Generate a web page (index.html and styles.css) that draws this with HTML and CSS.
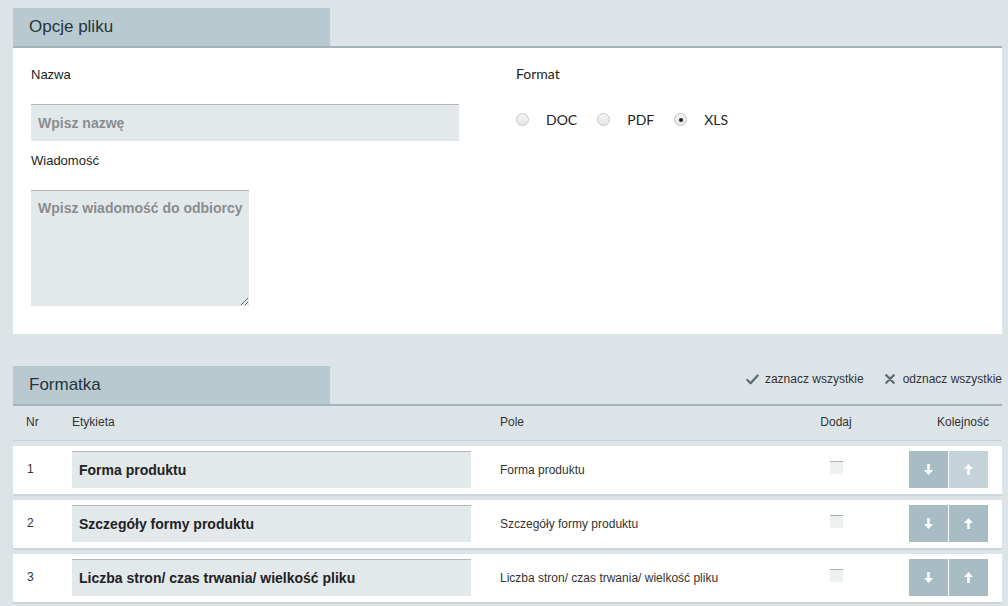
FILE: index.html
```html
<!DOCTYPE html>
<html lang="pl">
<head>
<meta charset="utf-8">
<title>Opcje pliku</title>
<link rel="stylesheet" href="styles.css">
</head>
<body>
<section class="section">
  <div class="sec-head">
    <h2 class="tab">Opcje pliku</h2>
  </div>
  <div class="panel">
    <div class="col">
      <label class="lbl" for="nazwa">Nazwa</label>
      <input class="field" id="nazwa" type="text" placeholder="Wpisz nazwę">
      <label class="lbl lbl-2" for="wiad">Wiadomość</label>
      <textarea class="field area" id="wiad" placeholder="Wpisz wiadomość do odbiorcy"></textarea>
    </div>
    <div class="col">
      <div class="lbl lbl-format">Format</div>
      <div class="radios">
        <label class="radio"><input type="radio" name="fmt"><span>DOC</span></label>
        <label class="radio"><input type="radio" name="fmt"><span>PDF</span></label>
        <label class="radio"><input type="radio" name="fmt" checked><span>XLS</span></label>
      </div>
    </div>
  </div>
</section>

<section class="section section-2">
  <div class="sec-head">
    <h2 class="tab">Formatka</h2>
    <div class="actions">
      <a class="act"><svg width="13" height="11" viewBox="0 0 13 11"><path d="M1.3 6 L4.6 9.3 L11.7 1.5" fill="none" stroke="#5d6b70" stroke-width="2.2" stroke-linecap="round" stroke-linejoin="round"/></svg>zaznacz wszystkie</a>
      <a class="act act-x"><svg width="10" height="10" viewBox="0 0 10 10"><path d="M1.3 1.3 L8.7 8.7 M8.7 1.3 L1.3 8.7" fill="none" stroke="#5d6b70" stroke-width="2.3" stroke-linecap="round"/></svg>odznacz wszystkie</a>
    </div>
  </div>
  <div class="grid thead">
    <div class="c-nr">Nr</div>
    <div>Etykieta</div>
    <div>Pole</div>
    <div class="c-add">Dodaj</div>
    <div class="c-ord">Kolejność</div>
  </div>
  <div class="grid row">
    <div class="c-nr">1</div>
    <div><input class="rfield" type="text" value="Forma produktu"></div>
    <div class="pole">Forma produktu</div>
    <div class="c-add"><input class="chk" type="checkbox"></div>
    <div class="c-ord"><span class="btns"><button class="btn"><svg width="9" height="11" viewBox="0 0 9 11"><path d="M3.2 0 H5.8 V6 H9 L4.5 11 L0 6 H3.2 Z" fill="#fff"/></svg></button><button class="btn off"><svg width="9" height="11" viewBox="0 0 9 11"><path d="M3.2 11 H5.8 V5 H9 L4.5 0 L0 5 H3.2 Z" fill="#fff"/></svg></button></span></div>
  </div>
  <div class="grid row">
    <div class="c-nr">2</div>
    <div><input class="rfield" type="text" value="Szczegóły formy produktu"></div>
    <div class="pole">Szczegóły formy produktu</div>
    <div class="c-add"><input class="chk" type="checkbox"></div>
    <div class="c-ord"><span class="btns"><button class="btn"><svg width="9" height="11" viewBox="0 0 9 11"><path d="M3.2 0 H5.8 V6 H9 L4.5 11 L0 6 H3.2 Z" fill="#fff"/></svg></button><button class="btn"><svg width="9" height="11" viewBox="0 0 9 11"><path d="M3.2 11 H5.8 V5 H9 L4.5 0 L0 5 H3.2 Z" fill="#fff"/></svg></button></span></div>
  </div>
  <div class="grid row">
    <div class="c-nr">3</div>
    <div><input class="rfield" type="text" value="Liczba stron/ czas trwania/ wielkość pliku"></div>
    <div class="pole">Liczba stron/ czas trwania/ wielkość pliku</div>
    <div class="c-add"><input class="chk" type="checkbox"></div>
    <div class="c-ord"><span class="btns"><button class="btn"><svg width="9" height="11" viewBox="0 0 9 11"><path d="M3.2 0 H5.8 V6 H9 L4.5 11 L0 6 H3.2 Z" fill="#fff"/></svg></button><button class="btn"><svg width="9" height="11" viewBox="0 0 9 11"><path d="M3.2 11 H5.8 V5 H9 L4.5 0 L0 5 H3.2 Z" fill="#fff"/></svg></button></span></div>
  </div>
</section>
</body>
</html>
```

FILE: styles.css
```css
* { box-sizing: border-box; }
html, body { margin: 0; padding: 0; }
body {
  background: #dde4e7;
  font-family: "Liberation Sans", Arial, sans-serif;
  color: #222;
  padding: 8px 6px 0 13px;
  overflow: hidden;
}
.section { width: 989px; }
.section-2 { margin-top: 32px; }

.sec-head {
  display: flex;
  align-items: stretch;
  justify-content: space-between;
  height: 40px;
  border-bottom: 2px solid #a4b4ba;
}
.tab {
  margin: 0;
  width: 317px;
  background: #b8cad0;
  font-weight: normal;
  font-size: 17px;
  color: #26343a;
  padding-left: 16px;
  display: flex;
  align-items: center;
}

.panel {
  background: #fff;
  display: grid;
  grid-template-columns: 485px 1fr;
  padding: 18px 18px 28px 18px;
}
.lbl {
  display: block;
  font-size: 13px;
  line-height: 16px;
  color: #222;
  padding-top: 1px;
}
.lbl-2 { margin-top: 11px; }
.lbl-format { font-family: Lato, "Liberation Sans", sans-serif; font-size: 14px; padding-top: 0; }
.field {
  display: block;
  margin-top: 21px;
  width: 428px;
  height: 37px;
  border: none;
  border-top: 1px solid #b3b7b9;
  background: #e3e8eb;
  padding: 0 7px;
  font-family: "Liberation Sans", Arial, sans-serif;
  font-weight: bold;
  font-size: 14px;
  color: #333;
  outline: none;
}
.field::placeholder { color: #8a8d8f; }
.area {
  width: 218px;
  height: 116px;
  padding: 9px 0 9px 7px;
  resize: both;
}

.radios {
  margin-top: 19px;
  height: 37px;
  display: flex;
  align-items: center;
  gap: 20px;
}
.radio {
  display: flex;
  align-items: center;
  gap: 17px;
  font-family: Lato, "Liberation Sans", sans-serif;
  font-size: 14px;
  color: #222;
}
.radio input {
  appearance: none;
  -webkit-appearance: none;
  margin: 0;
  width: 13px;
  height: 13px;
  border-radius: 50%;
  border: 1px solid #c4c6c8;
  background: linear-gradient(#f4f4f4, #e6e6e6);
  position: relative;
}
.radio input:checked::after {
  content: "";
  position: absolute;
  left: 3.5px; top: 3.5px;
  width: 4px; height: 4px;
  border-radius: 50%;
  background: #222;
}

.actions {
  display: flex;
  align-items: flex-start;
  padding-top: 6px;
  gap: 21px;
  font-size: 12px;
  color: #333;
}
.act { display: flex; align-items: center; gap: 6px; }
.act-x { gap: 8px; }

.grid {
  display: grid;
  grid-template-columns: 59px 428px 300px 72px 1fr;
  align-items: center;
}
.thead {
  height: 35px;
  padding-bottom: 3px;
  border-bottom: 1px solid #c6d0d4;
  font-size: 12px;
  color: #333;
  margin-bottom: 5px;
}
.c-nr { padding-left: 13px; }
.c-add { text-align: center; }
.c-ord { text-align: right; padding-right: 14px; }
.thead .c-ord { padding-right: 13px; }
.row {
  background: #fff;
  height: 50px;
  border-bottom: 2px solid #cdd6da;
  margin-bottom: 4px;
  font-size: 12px;
  color: #333;
  padding-bottom: 2px;
}
.row .c-nr { padding-left: 14px; }
.row .pole { padding-top: 2px; }
.rfield {
  display: block;
  width: 399px;
  height: 37px;
  border: none;
  border-top: 1px solid #b3b7b9;
  background: #e3e8eb;
  padding: 0 7px;
  font-family: "Liberation Sans", Arial, sans-serif;
  font-weight: bold;
  font-size: 14px;
  color: #222;
  outline: none;
}
.chk {
  appearance: none;
  -webkit-appearance: none;
  margin: 0 0 3px 0;
  width: 13px;
  height: 13px;
  border: none;
  border-top: 1px solid #a9adb0;
  background: #eef1f2;
  vertical-align: middle;
}
.btns { display: inline-flex; gap: 1px; vertical-align: middle; }
.btn {
  width: 39px;
  height: 37px;
  border: none;
  padding: 0;
  background: #a7bcc3;
  display: flex;
  align-items: center;
  justify-content: center;
}
.btn.off { background: #c3d3d8; }
```
